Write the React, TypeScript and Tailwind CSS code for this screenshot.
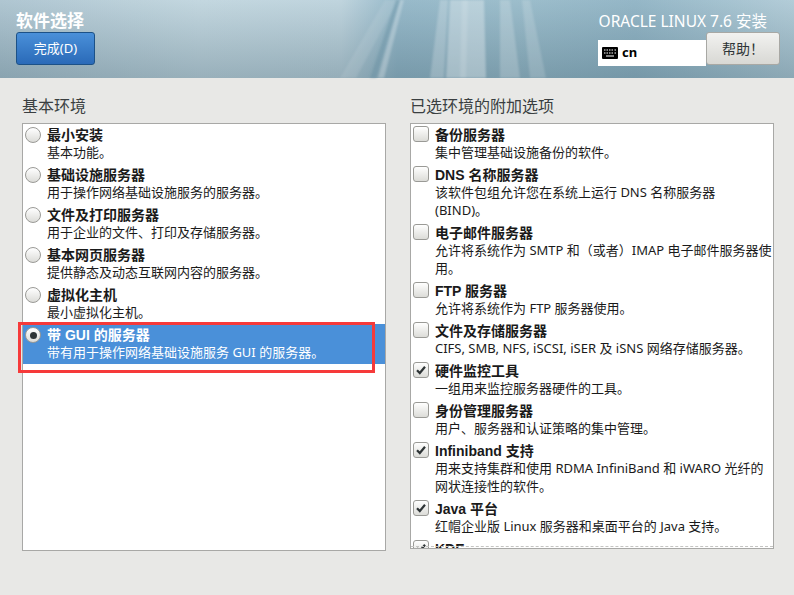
const font = { fontFamily: '"Noto Sans", "Noto Sans CJK SC", sans-serif' };
const nameFont = { fontFamily: '"Liberation Sans", "Noto Sans CJK SC", sans-serif' };

const environments = [
    { name: "最小安装", desc: "基本功能。" },
    { name: "基础设施服务器", desc: "用于操作网络基础设施服务的服务器。" },
    { name: "文件及打印服务器", desc: "用于企业的文件、打印及存储服务器。" },
    { name: "基本网页服务器", desc: "提供静态及动态互联网内容的服务器。" },
    { name: "虚拟化主机", desc: "最小虚拟化主机。" },
    { name: "带 GUI 的服务器", desc: "带有用于操作网络基础设施服务 GUI 的服务器。", selected: true },
];

const addons = [
    { name: "备份服务器", desc: ["集中管理基础设施备份的软件。"] },
    { name: "DNS 名称服务器", desc: ["该软件包组允许您在系统上运行 DNS 名称服务器", "(BIND)。"] },
    { name: "电子邮件服务器", desc: ["允许将系统作为 SMTP 和（或者）IMAP 电子邮件服务器使", "用。"] },
    { name: "FTP 服务器", desc: ["允许将系统作为 FTP 服务器使用。"] },
    { name: "文件及存储服务器", desc: ["CIFS, SMB, NFS, iSCSI, iSER 及 iSNS 网络存储服务器。"] },
    { name: "硬件监控工具", desc: ["一组用来监控服务器硬件的工具。"], checked: true },
    { name: "身份管理服务器", desc: ["用户、服务器和认证策略的集中管理。"] },
    { name: "Infiniband 支持", desc: ["用来支持集群和使用 RDMA InfiniBand 和 iWARO 光纤的", "网状连接性的软件。"], checked: true },
    { name: "Java 平台", desc: ["红帽企业版 Linux 服务器和桌面平台的 Java 支持。"], checked: true },
    { name: "KDE", desc: [], checked: true },
];

function Radio({ on }: { on?: boolean }) {
    return (
        <span className="mt-[1px] flex h-[16px] w-[16px] shrink-0 items-center justify-center rounded-full border border-[#9a9a96] bg-gradient-to-b from-[#ffffff] to-[#dcdcd8]">
            {on && <span className="h-[7px] w-[7px] rounded-full bg-[#2e3436]" />}
        </span>
    );
}

function Check({ on }: { on?: boolean }) {
    return (
        <span className="flex h-[16px] w-[16px] shrink-0 items-center justify-center rounded-[3px] border border-[#9a9a96] bg-gradient-to-b from-[#ffffff] to-[#dcdcd8]">
            {on && (
                <svg width="12" height="12" viewBox="0 0 12 12">
                    <path d="M2 6.2 L4.8 9 L10 2.8" fill="none" stroke="#2e3436" strokeWidth="2.2" />
                </svg>
            )}
        </span>
    );
}

// light streaks behind the header text
function HeaderRays() {
    return (
        <svg className="absolute inset-0 blur-[1px]" width="794" height="78" viewBox="0 0 794 78">
            <polygon points="340,78 385,0 398,0 356,78" fill="#ffffff" opacity="0.1" />
            <polygon points="370,78 396,0 400,0 376,78" fill="#5f8a9d" opacity="0.35" />
            <polygon points="378,78 400,0 404,0 384,78" fill="#ffffff" opacity="0.25" />
            <polygon points="430,78 440,0 448,0 444,78" fill="#ffffff" opacity="0.22" />
            <polygon points="446,78 450,0 484,0 486,78" fill="#ffffff" opacity="0.32" />
            <polygon points="460,78 462,0 468,0 466,78" fill="#ffffff" opacity="0.12" />
            <polygon points="500,78 500,0 510,0 520,78" fill="#ffffff" opacity="0.2" />
            <polygon points="530,78 522,0 530,0 546,78" fill="#ffffff" opacity="0.16" />
        </svg>
    );
}

export default function App() {
    return (
        <div className="flex h-[595px] w-[794px] flex-col overflow-hidden bg-[#e8e8e6]" style={font}>
            <header className="relative h-[78px] shrink-0 bg-[linear-gradient(180deg,rgba(255,255,255,0.05),rgba(50,80,95,0.28)),linear-gradient(90deg,#abc3cf_0%,#c0d5de_25%,#bcd2dc_43%,#92b6c7_50%,#97bac9_65%,#8fb3c4_80%,#afcad6_100%)]">
                <HeaderRays />
                <div className="relative flex h-full justify-between pl-[16px] pr-[14px]">
                    <div className="flex flex-col items-start pt-[11px]">
                        <h1 className="text-[17px] leading-[20px] font-bold text-white">软件选择</h1>
                        <button
                            type="button"
                            className="mt-[1px] h-[33px] w-[79px] rounded-[3px] border border-[#1c5187] bg-gradient-to-b from-[#4a90d9] to-[#2a6ab8] text-[13px] text-white"
                        >
                            完成(D)
                        </button>
                    </div>
                    <div className="flex flex-col items-end pt-[11px]">
                        <div className="pr-[13px] text-[15.5px] leading-[20px] text-white">ORACLE LINUX 7.6 安装</div>
                        <div className="mt-[1px] flex items-start">
                            <div className="mt-[8px] flex h-[26px] w-[108px] items-center gap-[4px] bg-white pl-[4px]">
                                <svg width="16" height="12" viewBox="0 0 16 12">
                                    <rect width="16" height="12" rx="1" fill="#000000" />
                                    <path d="M2 3h1.5M4.5 3H6M7 3h1.5M9.5 3H11M12.5 3H14M2 6h1.5M4.5 6H6M7 6h1.5M9.5 6H11M12.5 6H14M4 9h8" stroke="#ffffff" strokeWidth="1.2" />
                                </svg>
                                <span className="text-[13px] font-bold text-black">cn</span>
                            </div>
                            <button
                                type="button"
                                className="h-[33px] w-[74px] rounded-[3px] border border-[#a8a8a4] bg-gradient-to-b from-[#f2f2f0] to-[#d8d8d4] text-[14px] text-[#2e3436]"
                            >
                                帮助！
                            </button>
                        </div>
                    </div>
                </div>
            </header>

            <main className="flex gap-[24px] pl-[22px] pt-[18px]">
                <section className="w-[364px]">
                    <h2 className="h-[20px] text-[16px] leading-[20px] text-[#3a3f41]">基本环境</h2>
                    <div className="relative mt-[7px] h-[428px] border border-[#a8a8a6] bg-white">
                        {environments.map((env) => (
                            <div
                                key={env.name}
                                className={`flex h-[40px] gap-[6px] pl-[2px] pt-[2px] ${env.selected ? "bg-[#4a90d9] text-white" : "text-[#1a1a1a]"}`}
                            >
                                <Radio on={env.selected} />
                                <div className="text-[13px] leading-[18px]">
                                    <div className="h-[17px] text-[14px] font-bold" style={nameFont}>
                                        {env.name}
                                    </div>
                                    <div className="h-[18px]">{env.desc}</div>
                                </div>
                            </div>
                        ))}
                        <div className="absolute left-[-5px] top-[198px] h-[51px] w-[357px] border-[3px] border-[#f63a3a]" />
                    </div>
                </section>

                <section className="w-[364px]">
                    <h2 className="h-[20px] text-[16px] leading-[20px] text-[#3a3f41]">已选环境的附加选项</h2>
                    <div className="relative mt-[7px] h-[426px] overflow-hidden border border-[#a8a8a6] bg-white pt-[2px] text-[#1a1a1a]">
                        {addons.map((a) => (
                            <div key={a.name} className="flex gap-[6px] pb-[5px] pl-[2px]">
                                <Check on={a.checked} />
                                <div className="text-[13px] leading-[18px]">
                                    <div className="h-[17px] text-[14px] font-bold" style={nameFont}>
                                        {a.name}
                                    </div>
                                    {a.desc.map((line) => (
                                        <div key={line} className="h-[18px]">
                                            {line}
                                        </div>
                                    ))}
                                </div>
                            </div>
                        ))}
                        <div className="absolute bottom-[1px] left-0 right-0 border-t border-dashed border-[#c4c4c2]" />
                    </div>
                </section>
            </main>
        </div>
    );
}
